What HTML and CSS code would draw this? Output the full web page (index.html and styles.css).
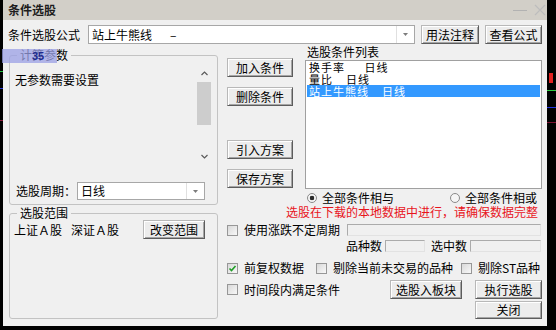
FILE: index.html
```html
<!DOCTYPE html>
<html lang="zh-CN">
<head>
  <meta charset="UTF-8" />
  <title>条件选股</title>
  <meta name="viewport" content="width=device-width, initial-scale=1.0" />
  <link rel="stylesheet" href="styles.css">
</head>
<body>

  <div class="edge-left"></div>

  <div class="window">
    <div class="titlebar">
      <span class="title">条件选股</span>
      <svg class="win-min" width="14" height="12" viewBox="0 0 14 12"><line x1="0" y1="6.5" x2="14" y2="6.5" stroke="#b2b2b2" stroke-width="1"/></svg>
      <svg class="win-close" width="12" height="12" viewBox="0 0 12 12"><path d="M1 1 L11 11 M11 1 L1 11" stroke="#bdbdbd" stroke-width="1.2" fill="none"/></svg>
    </div>

    <div class="client">
      <div class="formula-row">
        <span class="formula-label">条件选股公式</span>
        <div class="combo formula-combo">
          <span class="combo-text">站上牛熊线&ensp;&ensp;&ensp;–</span>
          <span class="combo-btn"><svg width="5" height="3" viewBox="0 0 5 3"><polygon points="0,0 5,0 2.5,3" fill="#7c7c7c"/></svg></span>
        </div>
        <button class="btn btn-note">用法注释</button>
        <button class="btn btn-view">查看公式</button>
      </div>

      <div class="main">
        <div class="left-col">
          <fieldset class="group params">
            <legend>计算参数</legend>
            <div class="param-area">
              <div class="param-text">无参数需要设置</div>
              <div class="scrollbar">
                <span class="sb-arrow"><svg width="7" height="5" viewBox="0 0 7 5"><polyline points="0.5,4 3.5,1 6.5,4" fill="none" stroke="#5a5a5a" stroke-width="1.2"/></svg></span>
                <span class="sb-thumb"></span>
                <span class="sb-track"></span>
                <span class="sb-arrow"><svg width="7" height="5" viewBox="0 0 7 5"><polyline points="0.5,1 3.5,4 6.5,1" fill="none" stroke="#5a5a5a" stroke-width="1.2"/></svg></span>
              </div>
            </div>
            <div class="period-row">
              <span class="period-label">选股周期：</span>
              <div class="combo period-combo">
                <span class="combo-text">日线</span>
                <span class="combo-btn"><svg width="5" height="3" viewBox="0 0 5 3"><polygon points="0,0 5,0 2.5,3" fill="#7c7c7c"/></svg></span>
              </div>
            </div>
          </fieldset>

          <fieldset class="group range">
            <legend>选股范围</legend>
            <div class="range-row">
              <span class="market">上证Ａ股</span>
              <span class="market">深证Ａ股</span>
              <button class="btn btn-range">改变范围</button>
            </div>
          </fieldset>
        </div>

        <div class="right-col">
          <div class="upper">
            <div class="btn-col">
              <button class="btn btn-side">加入条件</button>
              <button class="btn btn-side">删除条件</button>
              <button class="btn btn-side btn-import">引入方案</button>
              <button class="btn btn-side">保存方案</button>
            </div>
            <div class="list-col">
              <div class="list-title">选股条件列表</div>
              <div class="list">
                <div class="list-row">换手率&ensp;&ensp;&ensp;日线</div>
                <div class="list-row">量比&ensp;&ensp;日线</div>
                <div class="list-row selected">站上牛熊线&ensp;&ensp;日线</div>
              </div>
            </div>
          </div>

          <div class="radio-row">
            <span class="radio-item"><span class="radio on"></span>全部条件相与</span>
            <span class="radio-item radio-or"><span class="radio"></span>全部条件相或</span>
          </div>

          <div class="notice">选股在下载的本地数据中进行，请确保数据完整</div>

          <div class="period-opt">
            <span class="check"></span><span>使用涨跌不定周期</span>
            <span class="field field-period"></span>
          </div>

          <div class="count-row">
            <span>品种数</span><span class="field field-count"></span>
            <span class="count-label">选中数</span><span class="field field-selected"></span>
          </div>

          <div class="flags">
            <span class="check-item"><span class="check"><svg width="9" height="9" viewBox="0 0 9 9"><polyline points="1.5,4.5 3.5,6.5 7.5,2" fill="none" stroke="#1f9e26" stroke-width="1.6"/></svg></span>前复权数据</span>
            <span class="check-item skip-idle"><span class="check"></span>剔除当前未交易的品种</span>
            <span class="check-item skip-st"><span class="check"></span>剔除ST品种</span>
          </div>

          <div class="action-row">
            <span class="check-item"><span class="check"></span>时间段内满足条件</span>
            <button class="btn btn-block">选股入板块</button>
            <button class="btn btn-run">执行选股</button>
          </div>

          <div class="close-row">
            <button class="btn btn-close">关闭</button>
          </div>
        </div>
      </div>
    </div>
  </div>

  <div class="edge-right"><div class="candle"></div></div>

  <div class="tip-badge">35</div>

</body>
</html>
```

FILE: styles.css
```css
body {
  margin: 0;
  width: 556px;
  height: 330px;
  overflow: hidden;
  position: relative;
  display: flex;
  background: #000;
  font-family: "Noto Sans CJK SC", "Noto Sans", sans-serif;
  font-size: 12px;
  line-height: 14px;
  color: #000;
}

/* chart behind the dialog */
.edge-left {
  width: 3px;
  flex: none;
  background: linear-gradient(to bottom, transparent 71px, #1fbf3a 71px 72px, transparent 72px 88px, #2a3ad0 88px 89px, transparent 89px 120px, #8a1a3a 120px 121px, transparent 121px);
}

.edge-right {
  width: 9px;
  flex: none;
  background: linear-gradient(to bottom, transparent 90px, #2ecc40 90px 91px, transparent 91px 107px, #2233dd 107px 108px, transparent 108px 122px, #7a1030 122px 123px, transparent 123px);
}

.candle {
  width: 4px;
  height: 10px;
  margin: 73px 0 0 2px;
  background: #e32020;
}

.window {
  width: 544px;
  height: 326px;
  flex: none;
  display: flex;
  flex-direction: column;
  background: #f0f0f0;
}

.titlebar {
  height: 20px;
  flex: none;
  display: flex;
  align-items: center;
  padding: 0 1px 0 5px;
  background: #d2cfc8;
}

.title {
  flex: 1;
  font-weight: bold;
  color: #1c1c1c;
}

.win-min {
  margin-right: 7px;
}

.client {
  flex: 1;
  padding: 5px 5px 0;
}

/* controls */
.btn {
  box-sizing: border-box;
  height: 19px;
  padding: 0;
  font: inherit;
  line-height: 17px;
  color: #000;
  text-align: center;
  background: #ececec;
  border: 1px solid;
  border-color: #b8b8b8 #5c5c5c #5c5c5c #b8b8b8;
  box-shadow: inset 1px 1px #fff, inset -1px -1px #a5a5a5;
}

.combo {
  box-sizing: border-box;
  height: 19px;
  display: flex;
  border: 1px solid #a7a7a7;
  background: #fff;
}

.combo-text {
  flex: 1;
  padding-left: 3px;
  line-height: 17px;
  white-space: nowrap;
  overflow: hidden;
}

.combo-btn {
  width: 17px;
  flex: none;
  display: flex;
  align-items: center;
  justify-content: center;
  border-left: 1px solid #e0e0e0;
}

.check {
  width: 11px;
  height: 11px;
  flex: none;
  box-sizing: border-box;
  display: flex;
  align-items: center;
  justify-content: center;
  margin-right: 6px;
  border: 1px solid #979797;
  background: linear-gradient(135deg, #d9d9d9, #f8f8f8);
}

.check-item {
  display: flex;
  align-items: center;
}

.field {
  box-sizing: border-box;
  height: 12px;
  border: 1px solid;
  border-color: #ababab #e2e2e2 #e2e2e2 #ababab;
  background: #f0f0f0;
}

.radio {
  width: 10px;
  height: 10px;
  flex: none;
  box-sizing: border-box;
  margin-right: 5px;
  border-radius: 50%;
  border: 1px solid #8a8a8a;
  background: #f6f6f6;
}

.radio.on {
  background: radial-gradient(circle, #2b2b2b 0 2px, #f6f6f6 2.6px);
}

/* formula row */
.formula-row {
  height: 19px;
  display: flex;
  align-items: center;
}

.formula-label {
  width: 80px;
  flex: none;
}

.formula-combo {
  width: 327px;
}

.btn-note {
  width: 58px;
  margin-left: 6px;
}

.btn-view {
  width: 57px;
  margin-left: 6px;
}

/* main area */
.main {
  display: flex;
  margin-top: 4px;
}

.left-col {
  width: 209px;
  flex: none;
  margin-left: 1px;
  display: flex;
  flex-direction: column;
  gap: 1px;
}

.group {
  margin: 0;
  min-width: 0;
  box-sizing: border-box;
  border: 1px solid #c3c3c3;
  border-radius: 3px;
}

.group legend {
  padding: 0 3px;
  margin-left: 2px;
  line-height: 14px;
}

.params {
  padding: 4px 5px;
}

.param-area {
  height: 98px;
  display: flex;
}

.param-text {
  flex: 1;
  padding-top: 7px;
}

.scrollbar {
  width: 16px;
  flex: none;
  display: flex;
  flex-direction: column;
  align-items: center;
}

.sb-arrow {
  width: 16px;
  height: 15px;
  display: flex;
  align-items: center;
  justify-content: center;
}

.sb-thumb {
  width: 14px;
  height: 43px;
  margin-top: 1px;
  background: #cdcdcd;
}

.sb-track {
  flex: 1;
}

.period-row {
  height: 18px;
  margin-top: 18px;
  display: flex;
  align-items: center;
}

.period-label {
  width: 61px;
  padding-left: 1px;
}

.period-combo {
  width: 128px;
  height: 18px;
}

.period-combo .combo-text {
  line-height: 16px;
}

.range {
  height: 113px;
  padding: 0 12px 0 4px;
}

.range legend {
  margin-left: 3px;
}

.range-row {
  height: 19px;
  display: flex;
  align-items: center;
}

.market + .market {
  margin-left: 9px;
}

.btn-range {
  width: 62px;
  margin-left: auto;
}

.right-col {
  width: 315px;
  flex: none;
  margin-left: 9px;
}

.upper {
  display: flex;
}

.btn-col {
  width: 66px;
  flex: none;
  display: flex;
  flex-direction: column;
  padding-top: 10px;
}

.btn-side {
  width: 66px;
}

.btn-side + .btn-side {
  margin-top: 10px;
}

.btn-col .btn-import {
  margin-top: 34px;
}

.list-col {
  width: 237px;
  margin-left: 12px;
}

.list-title {
  line-height: 12px;
  margin: -2px 0 2px;
  padding-left: 2px;
}

.list {
  height: 129px;
  box-sizing: border-box;
  padding: 0 1px;
  border: 1px solid #a0a0a0;
  background: #fff;
}

.list-row {
  height: 12px;
  font-size: 11px;
  line-height: 12px;
  letter-spacing: 1px;
  padding-left: 2px;
  white-space: pre;
}

.list-row.selected {
  background: #3399ff;
  color: #fff;
}

.radio-row {
  height: 14px;
  margin-top: 2px;
  padding: 0 5px 0 80px;
  display: flex;
  align-items: center;
}

.radio-item {
  display: flex;
  align-items: center;
}

.radio-or {
  margin-left: auto;
}

.notice {
  padding-right: 4px;
  text-align: right;
  color: #e8141c;
}

.period-opt {
  height: 16px;
  margin-top: 3px;
  display: flex;
  align-items: center;
}

.field-period {
  flex: 1;
  margin: 0 1px 0 7px;
}

.count-row {
  height: 14px;
  margin-top: 1px;
  padding-right: 1px;
  display: flex;
  align-items: center;
  justify-content: flex-end;
}

.field-count {
  width: 40px;
  margin-left: 3px;
}

.count-label {
  margin-left: 6px;
}

.field-selected {
  width: 71px;
  margin-left: 3px;
}

.flags {
  height: 14px;
  margin-top: 8px;
  display: flex;
  align-items: center;
}

.skip-idle {
  margin-left: 12px;
}

.skip-st {
  margin-left: 8px;
}

.action-row {
  height: 19px;
  margin-top: 5px;
  display: flex;
  align-items: center;
}

.btn-block {
  width: 72px;
  margin-left: auto;
}

.btn-run {
  width: 67px;
  margin-left: 13px;
}

.close-row {
  margin-top: 2px;
  display: flex;
  justify-content: flex-end;
}

.btn-close {
  width: 67px;
  height: 18px;
  line-height: 16px;
}

/* tooltip overlay left over from the chart */
.tip-badge {
  position: absolute;
  left: 2px;
  top: 49px;
  width: 55px;
  height: 14px;
  box-sizing: border-box;
  padding-left: 30px;
  background: rgba(155, 160, 229, 0.75);
  color: #1d2b8f;
  font: bold 11px/14px "Liberation Sans", sans-serif;
}
```
